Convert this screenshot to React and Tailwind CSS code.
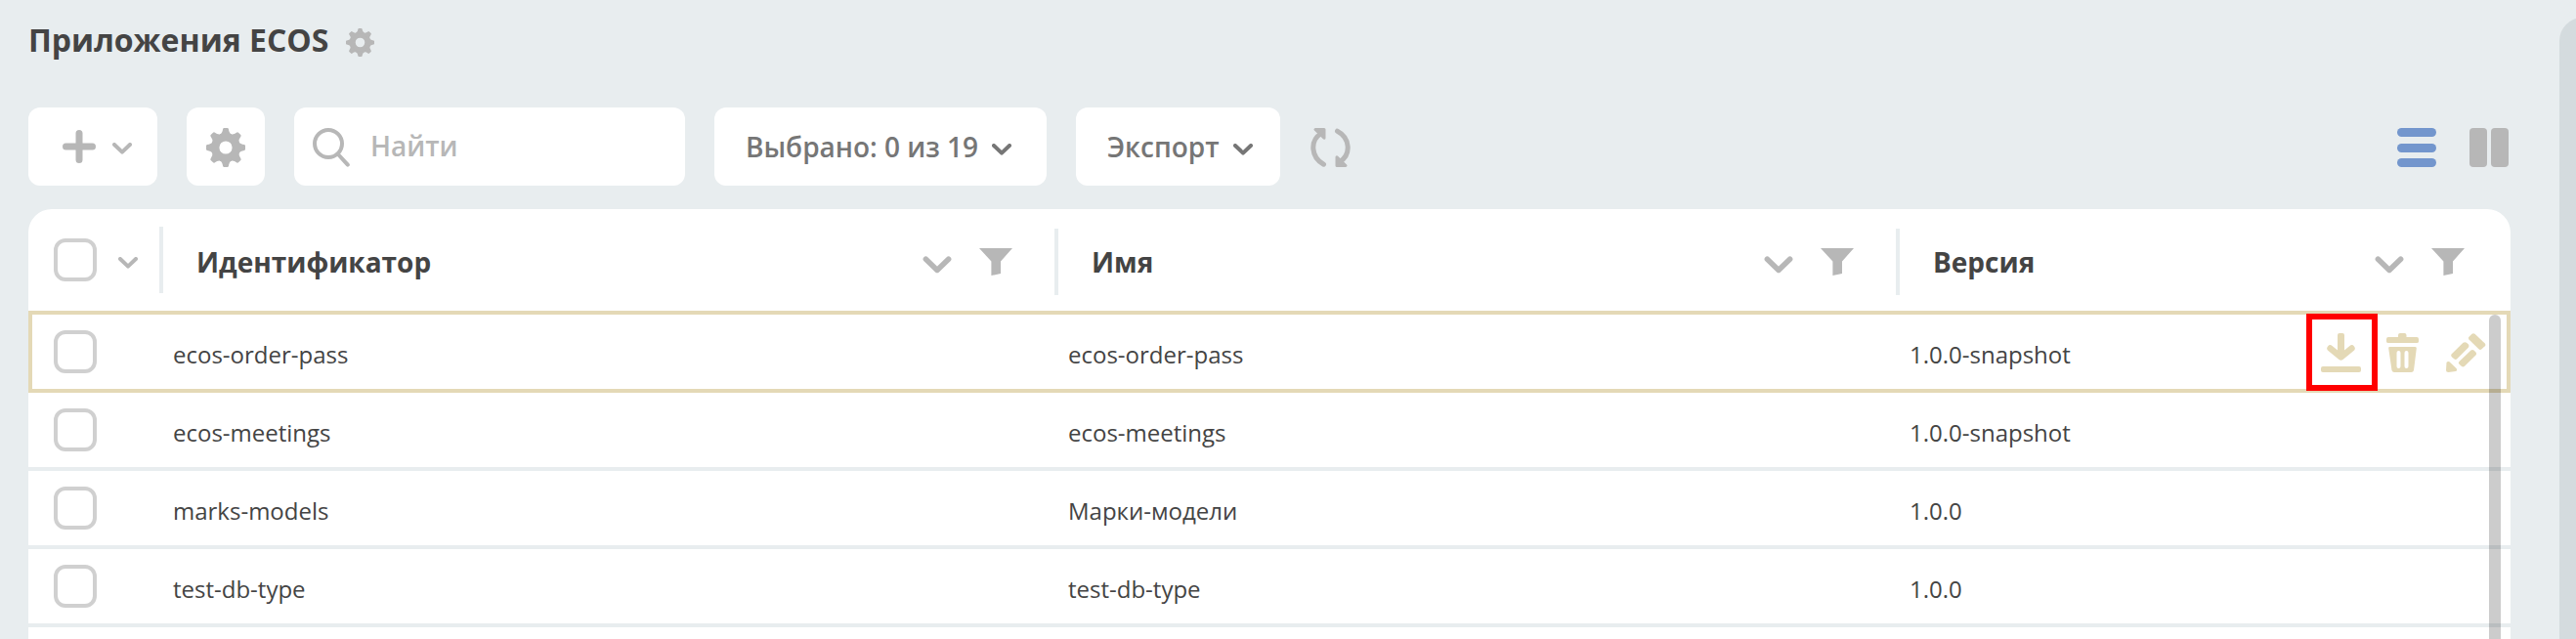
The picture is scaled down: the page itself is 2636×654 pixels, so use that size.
const COLUMNS = [
  { title: 'Идентификатор', width: 'w-[916px] shrink-0' },
  { title: 'Имя', width: 'w-[861px] shrink-0' },
  { title: 'Версия', width: 'flex-1' },
];

const ROWS = [
  ['ecos-order-pass', 'ecos-order-pass', '1.0.0-snapshot'],
  ['ecos-meetings', 'ecos-meetings', '1.0.0-snapshot'],
  ['marks-models', 'Марки-модели', '1.0.0'],
  ['test-db-type', 'test-db-type', '1.0.0'],
];

function Gear({ className }) {
  return (
    <svg viewBox="0 0 40 40" className={className} fill="none">
      <circle cx="20" cy="20" r="10.6" stroke="currentColor" strokeWidth="8" />
      {[0, 45, 90, 135, 180, 225, 270, 315].map((a) => (
        <path
          key={a}
          transform={`rotate(${a} 20 20)`}
          d="M14 6.6Q16.6 5.2 17.1 1Q17.4 0 18.3 0H21.7Q22.6 0 22.9 1Q23.4 5.2 26 6.6V8H14Z"
          fill="currentColor"
        />
      ))}
    </svg>
  );
}

function SmallChevron({ className }) {
  return (
    <svg viewBox="0 0 20 12" className={className} fill="none" stroke="currentColor" strokeWidth="4" strokeLinecap="round" strokeLinejoin="round">
      <path d="M2 2L10 9.6L18 2" />
    </svg>
  );
}

function BigChevron({ className }) {
  return (
    <svg viewBox="0 0 30 18" className={className} fill="none" stroke="currentColor" strokeWidth="5.6" strokeLinecap="round" strokeLinejoin="round">
      <path d="M3.4 3.2L15 14.4L26.6 3.2" />
    </svg>
  );
}

function Funnel() {
  return (
    <svg viewBox="0 0 34 28" className="h-[28px] w-[34px]" fill="currentColor">
      <path d="M0 0H34L22 13.6V26L12.4 28V13.6Z" />
    </svg>
  );
}

function Checkbox() {
  return <div className="h-11 w-11 shrink-0 rounded-xl border-4 border-[#d0d0d0] bg-white" />;
}

function Toolbar() {
  return (
    <div className="mt-[26px] flex h-20 items-center pl-[29px]">
      <button className="flex h-20 w-[132px] items-center rounded-xl bg-white pl-[35px] text-[#b7b7b7]">
        <svg viewBox="0 0 34 34" className="-mt-px h-[34px] w-[34px]" stroke="currentColor" strokeWidth="7" strokeLinecap="round">
          <path d="M17 3.5V30.5M3.5 17H30.5" />
        </svg>
        <SmallChevron className="ml-[17px] mt-1 h-3 w-5" />
      </button>
      <button className="ml-[30px] flex h-20 w-20 items-center justify-center rounded-xl bg-white text-[#b7b7b7]">
        <Gear className="mt-0.5 h-10 w-10" />
      </button>
      <div className="ml-[30px] flex h-20 w-[400px] items-center rounded-xl bg-white pl-[19px] text-[#b7b7b7]">
        <svg viewBox="0 0 38 40" className="mt-0.5 h-10 w-[38px]" fill="none" stroke="currentColor" strokeWidth="4" strokeLinecap="round">
          <circle cx="16" cy="16" r="14" />
          <path d="M26.5 27.5L35.8 37.6" />
        </svg>
        <span className="ml-[21px] -mt-0.5 text-[28px] leading-none font-semibold">Найти</span>
      </div>
      <button className="ml-[30px] flex h-20 w-[340px] items-center rounded-xl bg-white pl-8 text-[#767676]">
        <span className="text-[28px] leading-none font-semibold whitespace-nowrap">Выбрано: 0 из 19</span>
        <SmallChevron className="ml-3.5 mt-[5px] h-3 w-5" />
      </button>
      <button className="ml-[30px] flex h-20 w-[209px] items-center rounded-xl bg-white pl-8 text-[#767676]">
        <span className="text-[28px] leading-none font-semibold">Экспорт</span>
        <SmallChevron className="ml-3.5 mt-[5px] h-3 w-5" />
      </button>
      <svg viewBox="0 0 42 40" className="ml-[31px] mt-0.5 h-10 w-[42px] text-[#b7b7b7]" fill="none" stroke="currentColor" strokeWidth="5" strokeLinecap="round" strokeLinejoin="round">
        <path d="M13.5 37.2C0.5 30 -1 13 11 5.5" />
        <path d="M27.500 3.200C40.500 10 42 27 30 34.5" />
        <path d="M5 1.5H14V10.300Z" fill="currentColor" strokeWidth="3" />
        <path d="M36 38.5H27V29.700Z" fill="currentColor" strokeWidth="3" />
      </svg>
      <div className="ml-auto mt-0.5 mr-[52px] flex items-center gap-[34px]">
        <svg viewBox="0 0 40 40" className="h-10 w-10 text-[#7396cd]" fill="currentColor">
          <rect width="40" height="9" rx="4.5" />
          <rect y="16" width="40" height="9" rx="4.5" />
          <rect y="31" width="40" height="9" rx="4.5" />
        </svg>
        <div className="flex h-10 w-10 gap-1">
          <div className="flex-1 rounded-[4px] bg-[#b7b7b7]" />
          <div className="flex-1 rounded-[4px] bg-[#b7b7b7]" />
        </div>
      </div>
    </div>
  );
}

function RowActions() {
  return (
    <div className="flex h-full items-center text-[#e4d9b6]">
      <div className="mt-px flex h-[79px] w-[73px] shrink-0 items-center justify-center border-6 border-[#ff0000] pr-[3px]">
        <svg viewBox="0 0 41 40" className="mt-px h-10 w-[41px]" fill="currentColor">
          <rect x="17" width="7" height="24" rx="2" />
          <path d="M9.5 15.500L20.5 24.500L31.5 15.500" fill="none" stroke="currentColor" strokeWidth="6.4" strokeLinecap="round" strokeLinejoin="round" />
          <rect y="34" width="41" height="6" rx="2" />
        </svg>
      </div>
      <svg viewBox="0 0 33 40" className="mt-0.5 ml-[9px] h-10 w-[33px]" fill="currentColor">
        <path d="M12 4V2Q12 0 14 0H18.5Q20.5 0 20.5 2V4H31Q33 4 33 6V8.5Q33 10 31 10H2Q0 10 0 8.5V6Q0 4 2 4Z" />
        <path fillRule="evenodd" d="M3 14H29.5Q31 14 30.8 15.5L28 38Q27.5 40 25.5 40H8Q6 40 5.5 38L2.2 15.5Q2 14 3 14ZM12.5 18Q10.5 18 10.5 20V34Q10.5 36 12.5 36T14.5 34V20Q14.5 18 12.5 18ZM20.5 18Q18.5 18 18.5 20V34Q18.5 36 20.5 36T22.5 34V20Q22.5 18 20.5 18Z" />
      </svg>
      <svg viewBox="0 0 41 40" className="mt-0.5 ml-[28px] h-10 w-[41px]" fill="currentColor">
        <path d="M26.5 0.8Q28 -0.5 29.5 0.8L39.8 10.5Q41 12 39.8 13.3L36.5 16.3Q35 17.5 33.5 16.3L23.5 6.5Q22.500 5 23.500 3.8Z" />
        <path d="M17.5 9.8Q19.500 8.5 21 9.8L23 11.5Q24 13 23 14.5L11.5 26Q10 27.500 8.5 26.5L6 24.5Q4.500 23 5.500 21.5Z" />
        <path d="M25.5 17.500Q27 16.500 28.5 17.500L30.5 19.500Q32 21 30.5 22.500L19 33.8Q17.500 35 16 34L13.5 31.8Q12 30.3 13.5 29Z" />
        <path d="M0.5 30Q1.5 28.500 3.500 29.200L10.5 36Q12 38 10 39L2.500 40Q0 40 0 37.500Z" />
      </svg>
    </div>
  );
}

function HeaderCell({ column, first }) {
  return (
    <div className={`flex h-[104px] items-center ${column.width}`}>
      <div className={`h-[68px] w-1 bg-[#e8edef] ${first ? '' : 'mt-1'}`} />
      <span className="ml-[34px] mt-1 text-[28px] leading-none font-bold text-[#444]">{column.title}</span>
      <div className="mt-10 mr-[43px] ml-auto flex items-start gap-[28px] self-start text-[#b7b7b7]">
        <BigChevron className="mt-2 h-[18px] w-[30px]" />
        <Funnel />
      </div>
    </div>
  );
}

function Table() {
  return (
    <div className="relative mt-6 ml-[29px] h-[440px] w-[2540px] overflow-hidden rounded-t-3xl bg-white">
      <div className="flex h-[104px] items-center pr-1">
        <div className="flex w-[134px] shrink-0 items-center pl-[26px] text-[#b7b7b7]">
          <Checkbox />
          <SmallChevron className="ml-[22px] mt-1.5 h-3 w-5" />
        </div>
        {COLUMNS.map((c, i) => (
          <HeaderCell key={c.title} column={c} first={i === 0} />
        ))}
      </div>
      {ROWS.map((row, i) => (
        <div
          key={row[0]}
          className={
            i === 0
              ? 'flex h-[84px] items-center border-4 border-[#e4d9b6]'
              : 'flex h-20 items-center border-b-4 border-b-[#e8edef] pl-1'
          }
        >
          <div className="w-[144px] shrink-0 pl-[22px]">
            <Checkbox />
          </div>
          {COLUMNS.map((c, j) => (
            <div key={c.title} className={`flex h-[76px] items-center ${c.width}`}>
              <span className="mt-1.5 text-[24px] leading-none text-[#444]">{row[j]}</span>
              {i === 0 && j === 2 && (
                <div className="ml-auto h-[76px] pr-[21px]">
                  <RowActions />
                </div>
              )}
            </div>
          ))}
        </div>
      ))}
      <div className="absolute top-[108px] right-2.5 bottom-0 w-3 rounded-t-md bg-black/20" />
    </div>
  );
}

export default function App() {
  return (
    <div className="flex h-[654px] w-[2636px] overflow-hidden bg-[#e8edef] font-['Open_Sans','Noto_Sans',sans-serif]">
      <main className="w-[2619px] shrink-0">
        <div className="flex h-[84px] items-center pl-[29px]">
          <h1 className="mb-0.5 text-[32px] leading-none font-bold text-[#444]">Приложения ECOS</h1>
          <Gear className="ml-[18px] mt-0.5 h-[29px] w-[29px] text-[#b7b7b7]" />
        </div>
        <Toolbar />
        <Table />
      </main>
      <aside className="mt-[18px] h-[636px] w-[60px] shrink-0 rounded-tl-3xl bg-[#d4dbde]" />
    </div>
  );
}
